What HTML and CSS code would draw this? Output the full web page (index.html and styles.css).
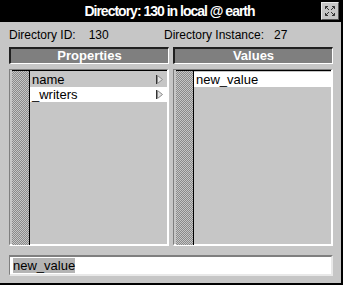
FILE: index.html
```html
<!DOCTYPE html>
<html lang="en">
<head>
    <meta charset="UTF-8">
    <title>Directory</title>
    <link rel="stylesheet" href="styles.css">
</head>
<body>

    <div class="window">
        <div class="titlebar">
            <span class="title">Directory: 130 in local @ earth</span>
            <span class="close">
                <svg width="16" height="16" viewBox="0 0 16 16">
                    <g stroke="#333" stroke-width="1" fill="none">
                        <path d="M3.5 3.5 L7 7 M3.5 3.5 L3.5 6 M3.5 3.5 L6 3.5"/>
                        <path d="M12.5 3.5 L9 7 M12.5 3.5 L12.5 6 M12.5 3.5 L10 3.5"/>
                        <path d="M3.5 12.5 L7 9 M3.5 12.5 L3.5 10 M3.5 12.5 L6 12.5"/>
                        <path d="M12.5 12.5 L9 9 M12.5 12.5 L12.5 10 M12.5 12.5 L10 12.5"/>
                    </g>
                </svg>
            </span>
        </div>

        <div class="content">
            <div class="info">
                <span class="info-item">Directory ID:<span class="val">130</span></span>
                <span class="info-item">Directory Instance:<span class="val">27</span></span>
            </div>

            <div class="columns">
                <div class="header">Properties</div>
                <div class="header">Values</div>

                <div class="list">
                    <svg class="stripe" width="17" height="100%">
                        <defs>
                            <pattern id="checker" width="2" height="2" patternUnits="userSpaceOnUse">
                                <rect width="2" height="2" fill="#c6c6c6"/>
                                <rect width="1" height="1" fill="#8a8a8a"/>
                                <rect x="1" y="1" width="1" height="1" fill="#8a8a8a"/>
                            </pattern>
                        </defs>
                        <rect width="100%" height="100%" fill="url(#checker)" shape-rendering="crispEdges"/>
                    </svg>
                    <div class="rows">
                        <div class="row">name<svg class="arrow" width="7" height="9" viewBox="0 0 7 9"><path d="M1.5 0.5 L6.5 4.5 L1.5 8.5 Z" fill="#e4e4e4" stroke="#8a8a8a"/><path d="M0.5 0 L0.5 9" stroke="#333"/></svg></div>
                        <div class="row sel">_writers<svg class="arrow" width="7" height="9" viewBox="0 0 7 9"><path d="M1.5 0.5 L6.5 4.5 L1.5 8.5 Z" fill="#e4e4e4" stroke="#8a8a8a"/><path d="M0.5 0 L0.5 9" stroke="#333"/></svg></div>
                    </div>
                </div>

                <div class="list">
                    <svg class="stripe" width="17" height="100%">
                        <rect width="100%" height="100%" fill="url(#checker)" shape-rendering="crispEdges"/>
                    </svg>
                    <div class="rows">
                        <div class="row sel">new_value</div>
                    </div>
                </div>
            </div>

            <div class="input"><span class="selected">new_value</span></div>
        </div>
    </div>

</body>
</html>
```

FILE: styles.css
```css
body {
    margin: 0;
    font-family: "Liberation Sans", Arial, sans-serif;
    background-color: #c6c6c6;
}
.window {
    width: 341px;
    height: 283px;
    border-right: 2px solid black;
    border-bottom: 2px solid black;
    background-color: #c6c6c6;
    display: flex;
    flex-direction: column;
}
.titlebar {
    height: 22px;
    background-color: black;
    color: white;
    display: flex;
    align-items: center;
    justify-content: center;
    position: relative;
}
.title {
    font-weight: bold;
    font-size: 14px;
    letter-spacing: -1px;
    margin-left: -2px;
}
.close {
    position: absolute;
    right: 2px;
    top: 2px;
    width: 16px;
    height: 16px;
    background-color: #c6c6c6;
    border: 1px solid #e8e8e8;
    border-right-color: #555;
    border-bottom-color: #555;
}
.close svg {
    display: block;
}
.content {
    padding: 0 8px 0 9px;
    display: flex;
    flex-direction: column;
}
.info {
    height: 24px;
    display: flex;
    align-items: center;
    font-size: 12px;
    padding-top: 1px;
}
.info-item {
    width: 155px;
}
.val {
    margin-left: 13px;
}
.info-item + .info-item .val {
    margin-left: 10px;
}
.columns {
    display: grid;
    grid-template-columns: 160px 160px;
    grid-template-rows: 17px 177px;
    column-gap: 4px;
    row-gap: 5px;
}
.header {
    background-color: #7f7f7f;
    color: white;
    font-weight: bold;
    font-size: 13px;
    text-align: center;
    line-height: 14px;
    border-top: 2px solid #202020;
    border-left: 2px solid #202020;
    border-right: 1px solid white;
    border-bottom: 1px solid white;
}
.list {
    display: flex;
    border-top: 1px solid #7f7f7f;
    border-left: 1px solid #7f7f7f;
    border-right: 2px solid white;
    border-bottom: 2px solid white;
}
.stripe {
    display: block;
    flex: none;
    margin-left: 2px;
    border-top: 1px solid black;
    border-right: 1px solid black;
}
.rows {
    flex: 1;
    border-top: 1px solid black;
    padding-top: 1px;
}
.row {
    height: 15px;
    line-height: 15px;
    font-size: 13px;
    padding-left: 2px;
    display: flex;
    align-items: center;
    justify-content: space-between;
}
.row.sel {
    background-color: white;
}
.arrow {
    display: block;
    margin-right: 4px;
}
.input {
    margin-top: 9px;
    height: 17px;
    background-color: white;
    border-top: 2px solid #7f7f7f;
    border-left: 1px solid #7f7f7f;
    border-right: 2px solid #e8e8e8;
    border-bottom: 2px solid #e8e8e8;
    font-size: 13px;
    line-height: 17px;
    padding-left: 3px;
}
.selected {
    background-color: #b4b4b4;
}
```
